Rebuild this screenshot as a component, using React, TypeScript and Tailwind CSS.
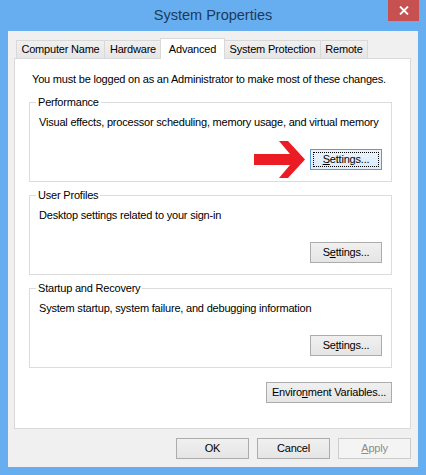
import React from "react";

const FONT = "font-['Liberation_Sans',Arial,sans-serif]";

function Btn({
  children,
  w,
  variant = "normal",
}: {
  children: React.ReactNode;
  w: string;
  variant?: "normal" | "focus" | "disabled";
}) {
  if (variant === "focus") {
    return (
      <div
        className={`${w} flex h-[21px] shrink-0 border border-[#5b9bd5] bg-linear-to-b from-[#eaf3fc] to-[#dcecfc] p-[2px] text-black`}
      >
        <div className="flex flex-1 items-center justify-center border border-dotted border-black">
          {children}
        </div>
      </div>
    );
  }
  if (variant === "disabled") {
    return (
      <div
        className={`${w} flex h-[21px] shrink-0 items-center justify-center border border-[#cccccc] bg-[#f4f4f4] text-[#8d8d8d]`}
      >
        {children}
      </div>
    );
  }
  return (
    <div
      className={`${w} flex h-[21px] shrink-0 items-center justify-center border border-[#acacac] bg-linear-to-b from-[#f0f0f0] to-[#e5e5e5] text-black`}
    >
      {children}
    </div>
  );
}

function Arrow() {
  return (
    <svg width="52" height="37" viewBox="0 0 52 37" className="-my-[8px] shrink-0">
      <polygon
        points="0,13 36,13 25,0 34,0 51,18.5 34,37 25,37 36,24 0,24"
        fill="#ec1c24"
      />
    </svg>
  );
}

function Group({
  label,
  desc,
  children,
  className = "",
}: {
  label: string;
  desc: string;
  children: React.ReactNode;
  className?: string;
}) {
  return (
    <div
      className={`relative flex flex-col border border-[#dcdcdc] px-[9px] pt-[12px] pb-[11px] ${className}`}
    >
      <span className="absolute -top-[8px] left-[6px] bg-white px-[2px] leading-[15px]">
        {label}
      </span>
      <div className="leading-[15px]">{desc}</div>
      <div className="mt-[19px] flex h-[21px] items-center justify-end gap-[4px]">
        {children}
      </div>
    </div>
  );
}

function Tab({
  label,
  w,
  selected = false,
  first = false,
  overlap = "-ml-px",
}: {
  label: string;
  w: string;
  selected?: boolean;
  first?: boolean;
  overlap?: string;
}) {
  if (selected) {
    return (
      <div
        className={`${w} ${overlap} relative z-10 -mb-px flex h-[21px] items-start justify-center border-x border-t border-[#d9d9d9] bg-white pt-[3px] leading-[15px]`}
      >
        {label}
      </div>
    );
  }
  return (
    <div
      className={`${w} ${first ? "" : overlap} flex h-[18px] items-center justify-center border-x border-t border-[#d9d9d9] bg-linear-to-b from-[#f0f0f0] to-[#e6e6e6] leading-[15px]`}
    >
      {label}
    </div>
  );
}

export default function App() {
  return (
    <div
      className={`${FONT} flex h-[475px] w-[426px] flex-col bg-[#66aeef] text-[11px] tracking-[-0.2px] text-black`}
    >
      {/* Title bar */}
      <div className="flex h-[31px] items-start">
        <div className="w-[38px] shrink-0" />
        <div className="flex-1 text-center text-[14.5px] leading-[30px] tracking-normal text-[#1c3a5b]">
          System Properties
        </div>
        <div className="mr-[7px] flex h-[21px] w-[31px] shrink-0 items-center justify-center bg-[#c75050]">
          <svg width="10" height="9" viewBox="0 0 10 9">
            <path d="M1 0.5 L9 8.5 M9 0.5 L1 8.5" stroke="#ffffff" strokeWidth="1.8" />
          </svg>
        </div>
      </div>

      {/* Client area */}
      <div className="mx-[8px] mb-[8px] flex flex-1 flex-col bg-[#f0f0f0] pt-[7px] pr-[7px] pb-[8px] pl-[6px]">
        {/* Tabs */}
        <div className="relative z-10 flex h-[20px] items-end pl-[2px]">
          <Tab label="Computer Name" w="w-[89px]" first />
          <Tab label="Hardware" w="w-[58px]" />
          <Tab label="Advanced" w="w-[65px]" selected overlap="-ml-[2px]" />
          <Tab label="System Protection" w="w-[97px]" />
          <Tab label="Remote" w="w-[48px]" />
        </div>

        {/* Panel */}
        <div className="flex flex-1 flex-col border border-[#d9d9d9] bg-white pt-[13px] pr-[18px] pl-[14px]">
          <div className="ml-[3px] leading-[15px]">
            You must be logged on as an Administrator to make most of these changes.
          </div>

          <Group
            className="mt-[15px]"
            label="Performance"
            desc="Visual effects, processor scheduling, memory usage, and virtual memory"
          >
            <Arrow />
            <Btn w="w-[72px]" variant="focus">
              <span>
                <span className="underline">S</span>ettings...
              </span>
            </Btn>
          </Group>

          <Group
            className="mt-[13px]"
            label="User Profiles"
            desc="Desktop settings related to your sign-in"
          >
            <Btn w="w-[72px]">
              <span>
                S<span className="underline">e</span>ttings...
              </span>
            </Btn>
          </Group>

          <Group
            className="mt-[13px]"
            label="Startup and Recovery"
            desc="System startup, system failure, and debugging information"
          >
            <Btn w="w-[72px]">
              <span>
                Se<span className="underline">t</span>tings...
              </span>
            </Btn>
          </Group>

          <div className="mt-[14px] flex justify-end">
            <Btn w="w-[126px]">
              <span>
                Enviro<span className="underline">n</span>ment Variables...
              </span>
            </Btn>
          </div>
        </div>

        {/* Bottom buttons */}
        <div className="mt-[9px] flex justify-end gap-[8px]">
          <Btn w="w-[73px]">OK</Btn>
          <Btn w="w-[73px]">Cancel</Btn>
          <Btn w="w-[73px]" variant="disabled">
            <span>
              <span className="underline">A</span>pply
            </span>
          </Btn>
        </div>
      </div>
    </div>
  );
}
